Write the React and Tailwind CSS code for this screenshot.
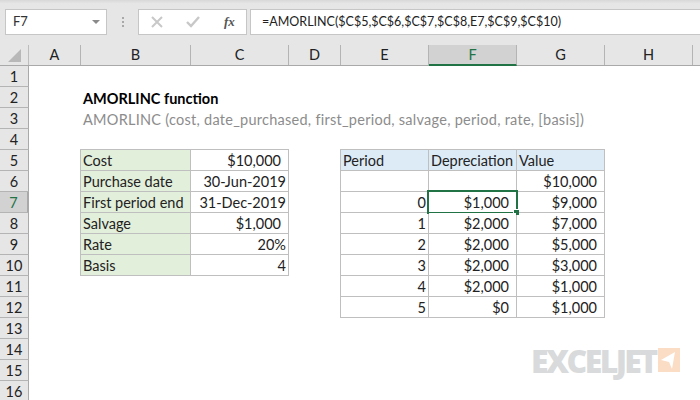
const COLUMNS = [
  { label: "A", width: "w-[52px]" },
  { label: "B", width: "w-[110px]" },
  { label: "C", width: "w-[98px]" },
  { label: "D", width: "w-[52px]" },
  { label: "E", width: "w-[88px]" },
  { label: "F", width: "w-[88px]", active: true },
  { label: "G", width: "w-[88px]" },
  { label: "H", width: "w-[88px]" },
];

const INPUTS = [
  ["Cost", "$10,000", true],
  ["Purchase date", "30-Jun-2019"],
  ["First period end", "31-Dec-2019"],
  ["Salvage", "$1,000", true],
  ["Rate", "20%"],
  ["Basis", "4"],
];

const SCHEDULE = [
  ["", "", "$10,000"],
  ["0", "$1,000", "$9,000"],
  ["1", "$2,000", "$7,000"],
  ["2", "$2,000", "$5,000"],
  ["3", "$2,000", "$3,000"],
  ["4", "$2,000", "$1,000"],
  ["5", "$0", "$1,000"],
];

const ROWS = Array.from({ length: 16 }, (_, i) => i + 1);

function FormulaBar() {
  return (
    <div className="flex h-[45px] items-start bg-gradient-to-b from-[#d8d8d8] from-0% to-[#e6e6e6] to-[8%] pt-[9px] pl-[5px]">
      <div className="flex h-[26px] w-[102px] items-center justify-between border border-[#c6c6c6] bg-white pl-[7px] pr-[6px] text-[13px] text-[#333]">
        <span>F7</span>
        <span className="h-0 w-0 border-x-[4px] border-t-[4px] border-x-transparent border-t-[#8a8a8a]" />
      </div>
      <div className="flex h-[26px] w-[31px] flex-col items-center justify-center gap-[2px]">
        <span className="h-[2px] w-[2px] bg-[#a8a8a8]" />
        <span className="h-[2px] w-[2px] bg-[#a8a8a8]" />
        <span className="h-[2px] w-[2px] bg-[#a8a8a8]" />
      </div>
      <div className="flex h-[26px] w-[109px] items-center border border-[#c6c6c6] bg-white">
        <svg className="ml-[12px]" width="12" height="12" viewBox="0 0 12 12">
          <path d="M1 1l10 10M11 1L1 11" stroke="#c8c8c8" strokeWidth="2" fill="none" />
        </svg>
        <svg className="ml-[23px]" width="14" height="12" viewBox="0 0 14 12">
          <path d="M1 6l4 4 8-9" stroke="#c8c8c8" strokeWidth="2.4" fill="none" />
        </svg>
        <span className="ml-[24px] font-['Liberation_Serif',serif] text-[13px] font-bold italic text-[#555]">
          fx
        </span>
      </div>
      <div className="ml-[3px] flex h-[26px] flex-1 items-center border-y border-l border-[#c6c6c6] bg-white pl-[11px] text-[12.5px] text-[#222]">
        =AMORLINC($C$5,$C$6,$C$7,$C$8,E7,$C$9,$C$10)
      </div>
    </div>
  );
}

function ColumnHeaders() {
  return (
    <div className="flex h-[21px] border-b border-[#a9a9a9] bg-[#e6e6e6]">
      <div className="flex w-[29px] items-end justify-center border-r border-[#bdbdbd] pb-[3px]">
        <span className="h-0 w-0 border-b-[13px] border-l-[13px] border-b-[#b8b8b8] border-l-transparent" />
      </div>
      {COLUMNS.map((col) => (
        <div
          key={col.label}
          className={`flex items-center justify-center border-r border-[#b4b4b4] ${col.width} ${
            col.active ? "-mb-px border-b-2 border-b-[#217346] bg-[#d2d2d2] text-[#217346]" : "text-[#222]"
          }`}
        >
          {col.label}
        </div>
      ))}
    </div>
  );
}

function InputsTable() {
  return (
    <div className="col-start-3 col-span-2 row-start-5 row-span-6 -ml-px -mt-px grid h-[127px] w-[209px] grid-cols-[109px_97px] auto-rows-[20px] gap-px border border-[#bfbfbf] bg-[#bfbfbf]">
      {INPUTS.map(([label, value, accounting]) => (
        <div key={label} className="contents">
          <div className="flex items-center bg-[#e2efda] pl-[2px] pt-[2px] text-[#222]">{label}</div>
          <div className={`flex items-center justify-end bg-white pt-[2px] text-[#222] ${accounting ? "pr-[7px]" : "pr-[2px]"}`}>
            {value}
          </div>
        </div>
      ))}
    </div>
  );
}

function ScheduleTable() {
  return (
    <div className="col-start-6 col-span-3 row-start-5 row-span-8 -ml-px -mt-px grid h-[169px] w-[265px] grid-cols-[87px_87px_87px] auto-rows-[20px] gap-px border border-[#bfbfbf] bg-[#bfbfbf]">
      {["Period", "Depreciation", "Value"].map((title) => (
        <div key={title} className="flex items-center bg-[#ddebf7] pl-[2px] pt-[2px] text-[#222]">
          {title}
        </div>
      ))}
      {SCHEDULE.map((row, i) => (
        <div key={i} className="contents">
          <div className="flex items-center justify-end bg-white pr-[2px] pt-[2px] text-[#222]">{row[0]}</div>
          <div className="relative flex items-center justify-end bg-white pr-[7px] pt-[2px] text-[#222]">
            {row[1]}
            {i === 1 && (
              <div className="absolute -inset-[2px] border-2 border-[#217346]">
                <span className="absolute -bottom-[3px] -right-[3px] h-[6px] w-[6px] border-l border-t border-white bg-[#217346]" />
              </div>
            )}
          </div>
          <div className="flex items-center justify-end bg-white pr-[7px] pt-[2px] text-[#222]">{row[2]}</div>
        </div>
      ))}
    </div>
  );
}

function Logo() {
  return (
    <div className="absolute left-[531px] top-[343px] flex items-start">
      <span className="w-[126px] font-['Open_Sans',sans-serif] text-[32px] font-extrabold leading-[36px] tracking-[-2.6px] text-[#d8dadb]">
        EXCELJET
      </span>
      <svg className="mt-[5px] ml-[1px]" width="22" height="24" viewBox="0 0 22 24">
        <rect width="22" height="24" fill="#fbdcc5" />
        <path d="M3 12L17 4l-3 17-3-7z" fill="#fff" />
      </svg>
    </div>
  );
}

export default function App() {
  return (
    <div className="relative h-[400px] w-[700px] overflow-hidden bg-white font-['Lato','Liberation_Sans',sans-serif] text-[14.5px]">
      <FormulaBar />
      <ColumnHeaders />
      <div className="grid grid-cols-[29px_52px_110px_98px_52px_88px_88px_88px_88px] auto-rows-[21px]">
        {ROWS.map((n) => (
          <div
            key={n}
            style={{ gridRowStart: n }}
            className={`col-start-1 flex items-center justify-center border-b border-b-[#b4b4b4] border-r border-r-[#a9a9a9] pt-[2px] ${
              n === 7 ? "border-r-2 border-r-[#217346] bg-[#d2d2d2] text-[#217346]" : "bg-[#e6e6e6] text-[#222]"
            }`}
          >
            {n}
          </div>
        ))}
        <div className="col-start-3 col-span-4 row-start-2 flex items-center whitespace-nowrap pl-[2px] pt-[2px] font-bold text-black">
          AMORLINC function
        </div>
        <div className="col-start-3 col-span-6 row-start-3 flex items-center whitespace-nowrap pl-[2px] pt-[2px] tracking-[0.26px] text-[#8c8c8c]">
          AMORLINC (cost, date_purchased, first_period, salvage, period, rate, [basis])
        </div>
        <InputsTable />
        <ScheduleTable />
      </div>
      <Logo />
    </div>
  );
}
